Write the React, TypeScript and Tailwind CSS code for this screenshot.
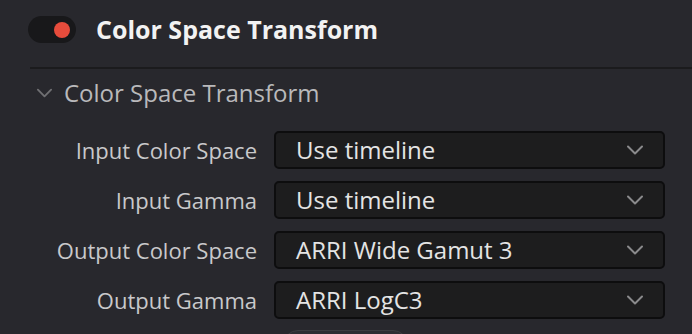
import React from 'react';

const rows = [
  { label: 'Input Color Space', value: 'Use timeline' },
  { label: 'Input Gamma', value: 'Use timeline' },
  { label: 'Output Color Space', value: 'ARRI Wide Gamut 3' },
  { label: 'Output Gamma', value: 'ARRI LogC3' },
];

const Chevron: React.FC<{ className?: string }> = ({ className }) => (
  <svg viewBox="0 0 18 10" className={className} fill="none" stroke="currentColor" strokeWidth={2} strokeLinecap="round" strokeLinejoin="round">
    <path d="M2 1.5 L9 8.5 L16 1.5" />
  </svg>
);

const App: React.FC = () => {
  return (
    <div className="w-[692px] h-[334px] overflow-hidden bg-[#28282d] font-['Open_Sans',sans-serif]">
      {/* header */}
      <div className="flex items-center h-[67px] pl-[28px] pb-[8px]">
        <div className="w-[48px] h-[27px] rounded-full bg-[#18181a] flex items-center justify-end pr-[6px]">
          <span className="w-[16px] h-[16px] rounded-full bg-[#e74c3c]" />
        </div>
        <span className="ml-[20px] text-[25px] font-bold text-[#f2f2f2] leading-none">Color Space Transform</span>
      </div>
      <div className="ml-[30px] h-[2px] bg-[#1b1b1d]" />

      {/* section */}
      <div className="flex items-center h-[52px] pl-[36px] pb-[4px]">
        <Chevron className="w-[17px] h-[10px] text-[#6f6f72]" />
        <span className="ml-[11px] text-[24px] text-[#b9b9bb] leading-none">Color Space Transform</span>
      </div>

      <div className="flex flex-col gap-[12px] mt-[10px]">
        {rows.map((r) => (
          <div key={r.label} className="flex items-center h-[38px]">
            <span className="w-[257px] text-right text-[22px] text-[#c9c9cb] leading-none">{r.label}</span>
            <div className="ml-[17px] w-[391px] h-[38px] rounded-[5px] border-2 border-[#0d0d0e] bg-[#1d1d1e] flex items-center pl-[20px] pr-[19px]">
              <span className="flex-1 text-[24px] text-[#e4e4e4] leading-none">{r.value}</span>
              <Chevron className="w-[18px] h-[10px] text-[#8a8a8c]" />
            </div>
          </div>
        ))}
      </div>

      <div className="ml-[283px] mt-[11px] w-[125px] h-[30px] rounded-full border border-[#3c3c40] bg-[#2d2d32]" />
    </div>
  );
};

export default App;
